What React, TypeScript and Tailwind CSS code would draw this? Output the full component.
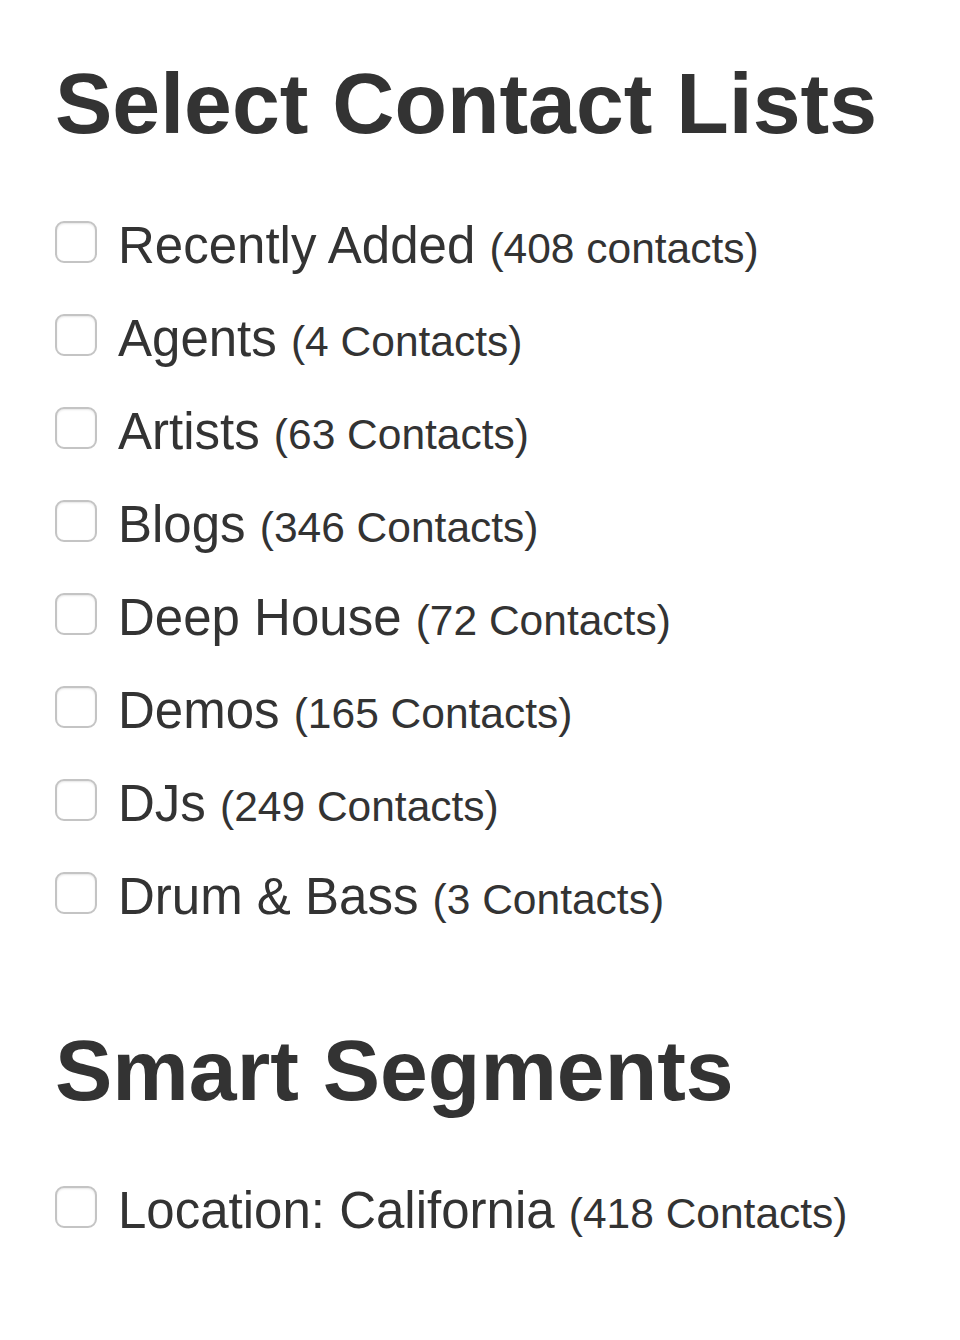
const lists = [
  { name: "Recently Added", count: "(408 contacts)" },
  { name: "Agents", count: "(4 Contacts)" },
  { name: "Artists", count: "(63 Contacts)" },
  { name: "Blogs", count: "(346 Contacts)" },
  { name: "Deep House", count: "(72 Contacts)" },
  { name: "Demos", count: "(165 Contacts)" },
  { name: "DJs", count: "(249 Contacts)" },
  { name: "Drum & Bass", count: "(3 Contacts)" },
];

const segments = [{ name: "Location: California", count: "(418 Contacts)" }];

function Row({ name, count }: { name: string; count: string }) {
  return (
    <label className="flex items-baseline h-[93px] leading-[93px] cursor-pointer">
      <span className="inline-block w-[42px] h-[42px] shrink-0 rounded-[9px] border-2 border-[#c4c4c4] bg-white shadow-[inset_0_1px_2px_rgba(0,0,0,0.1)] mb-[-1px]" />
      <span className="ml-[21px] text-[51px] whitespace-pre">{name} </span>
      <span className="text-[42.5px] whitespace-pre">{count}</span>
    </label>
  );
}

export default function App() {
  return (
    <div
      className="min-h-[1340px] bg-white text-[#333333] pl-[55px] pt-[60px]"
      style={{ fontFamily: '"Liberation Sans", Arial, sans-serif' }}
    >
      <h1 className="text-[86px] font-bold leading-none">Select Contact Lists</h1>
      <div className="mt-[53px] flex flex-col">
        {lists.map((l) => (
          <Row key={l.name} name={l.name} count={l.count} />
        ))}
      </div>

      <h2 className="mt-[84px] text-[86px] font-bold leading-none">Smart Segments</h2>
      <div className="mt-[51px] flex flex-col">
        {segments.map((s) => (
          <Row key={s.name} name={s.name} count={s.count} />
        ))}
      </div>
    </div>
  );
}
